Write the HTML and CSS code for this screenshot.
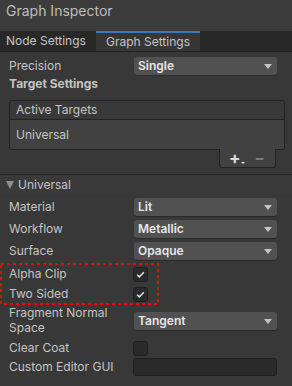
FILE: index.html
```html
<!DOCTYPE html>
<html>
<head>
    <title>Graph Inspector</title>
    <link rel="stylesheet" href="styles.css">
</head>
<body>

    <div class="window">
        <div class="title">Graph Inspector</div>

        <div class="tabs">
            <div class="tab">Node Settings</div>
            <div class="tab active">Graph Settings</div>
        </div>

        <div class="content">
            <div class="row">
                <div class="label">Precision</div>
                <div class="dropdown">Single<span class="arrow"></span></div>
            </div>
            <div class="section-title">Target Settings</div>

            <div class="list">
                <div class="list-head">Active Targets</div>
                <div class="list-item">Universal</div>
            </div>
            <div class="list-footer">
                <span class="plus">+<span class="mini-arrow"></span></span>
                <span class="minus">&minus;</span>
            </div>

            <div class="foldout"><span class="fold-arrow"></span>Universal</div>

            <div class="row">
                <div class="label">Material</div>
                <div class="dropdown">Lit<span class="arrow"></span></div>
            </div>
            <div class="row">
                <div class="label">Workflow</div>
                <div class="dropdown">Metallic<span class="arrow"></span></div>
            </div>
            <div class="row">
                <div class="label">Surface</div>
                <div class="dropdown">Opaque<span class="arrow"></span></div>
            </div>

            <div class="highlight">
                <div class="toggle-row">
                    <div class="label">Alpha Clip</div>
                    <div class="checkbox">
                        <svg width="13" height="13" viewBox="0 0 13 13"><path d="M3.2 6.8 L5.3 8.9 L9.8 4.2" fill="none" stroke="#e6e6e6" stroke-width="1.5"/></svg>
                    </div>
                </div>
                <div class="toggle-row">
                    <div class="label">Two Sided</div>
                    <div class="checkbox">
                        <svg width="13" height="13" viewBox="0 0 13 13"><path d="M3.2 6.8 L5.3 8.9 L9.8 4.2" fill="none" stroke="#e6e6e6" stroke-width="1.5"/></svg>
                    </div>
                </div>
                <svg class="dots" width="159" height="42" viewBox="0 0 159 42">
                    <rect x="1" y="1" width="157" height="40" fill="none" stroke="#ff0000" stroke-width="2" stroke-dasharray="3 3"/>
                </svg>
            </div>

            <div class="row tall">
                <div class="label wrap">Fragment Normal Space</div>
                <div class="dropdown">Tangent<span class="arrow"></span></div>
            </div>
            <div class="toggle-row">
                <div class="label">Clear Coat</div>
                <div class="checkbox"></div>
            </div>
            <div class="row">
                <div class="label">Custom Editor GUI</div>
                <div class="textfield"></div>
            </div>
        </div>
    </div>

</body>
</html>
```
FILE: styles.css
```css
body {
    margin: 0;
    padding: 0;
    background: #383838;
    font-family: Inter, "Noto Sans", sans-serif;
    font-size: 12px;
    color: #c4c4c4;
}
.window {
    width: 292px;
    height: 386px;
    overflow: hidden;
}
.title {
    height: 30px;
    padding: 1px 0 0 6px;
    background: #3c3c3c;
    font-size: 14px;
    line-height: 20px;
    color: #bdbdbd;
}
.tabs {
    display: flex;
    height: 20px;
    background: #282828;
    border-bottom: 1px solid #232323;
}
.tab {
    width: 90px;
    padding-left: 6px;
    line-height: 20px;
    white-space: nowrap;
    color: #c4c4c4;
}
.tab.active {
    width: 94px;
    padding-left: 10px;
    background: #363636;
    border-top: 2px solid #3a79bb;
    line-height: 18px;
}
.content {
    padding-top: 5px;
}
.row {
    display: flex;
    align-items: center;
    height: 18px;
    margin-bottom: 4px;
}
.label {
    width: 125px;
    padding-left: 9px;
    line-height: 18px;
    white-space: nowrap;
}
.label.wrap {
    white-space: normal;
    line-height: 15px;
    width: 118px;
    padding-right: 7px;
}
.row.tall {
    height: 30px;
    margin: 1px 0 3px;
}
.row.tall .dropdown {
    margin-top: 2px;
}
.dropdown {
    position: relative;
    width: 139px;
    height: 18px;
    padding-left: 4px;
    background: #515151;
    border-radius: 3px;
    box-shadow: 0 1px 0 #2a2a2a;
    color: #e6e6e6;
    font-weight: 600;
    line-height: 18px;
}
.arrow {
    position: absolute;
    right: 5px;
    top: 7px;
    width: 0;
    height: 0;
    border-left: 4px solid transparent;
    border-right: 4px solid transparent;
    border-top: 5px solid #c4c4c4;
}
.section-title {
    height: 18px;
    margin-top: -4px;
    padding-left: 9px;
    line-height: 18px;
    font-weight: 700;
    color: #c4c4c4;
}
.list {
    margin: 7px 7px 0 9px;
    border: 1px solid #232323;
    border-radius: 3px;
    overflow: hidden;
}
.list-head {
    height: 18px;
    padding-left: 6px;
    line-height: 18px;
    background: #393939;
    border-bottom: 1px solid #232323;
}
.list-item {
    height: 29px;
    padding-left: 6px;
    line-height: 29px;
    background: #414141;
}
.list-footer {
    display: flex;
    align-items: center;
    gap: 14px;
    height: 19px;
    margin: -1px 0 0 219px;
    padding-left: 9px;
    box-sizing: border-box;
    width: 57px;
    background: #414141;
    border: 1px solid #232323;
    border-top: none;
    border-radius: 0 0 3px 3px;
    color: #8f8f8f;
}
.plus {
    position: relative;
    font-size: 17px;
    font-weight: 700;
    line-height: 18px;
    color: #dcdcdc;
}
.mini-arrow {
    position: absolute;
    right: -4px;
    bottom: 3px;
    border-left: 2px solid transparent;
    border-right: 2px solid transparent;
    border-top: 2px solid #dcdcdc;
}
.minus {
    font-size: 15px;
    font-weight: 700;
    line-height: 18px;
    color: #7c7c7c;
}
.foldout {
    display: flex;
    align-items: center;
    height: 19px;
    margin-top: 6px;
    margin-bottom: 4px;
    border-top: 1px solid #232323;
    background: #3a3a3a;
    line-height: 19px;
}
.fold-arrow {
    width: 0;
    height: 0;
    margin: 0 4px 0 6px;
    border-left: 4.5px solid transparent;
    border-right: 4.5px solid transparent;
    border-top: 8px solid #8f8f8f;
}
.highlight {
    position: relative;
    width: 292px;
}
.dots {
    position: absolute;
    left: 0;
    top: -1px;
}
.toggle-row {
    display: flex;
    align-items: center;
    height: 20px;
}
.checkbox {
    width: 13px;
    height: 13px;
    margin-left: -1px;
    background: #2a2a2a;
    border: 1px solid #1f1f1f;
    border-radius: 3px;
}
.checkbox svg {
    display: block;
}
.textfield {
    width: 142px;
    height: 16px;
    margin-left: -1px;
    background: #2a2a2a;
    border: 1px solid #1f1f1f;
    border-radius: 3px;
}
```
